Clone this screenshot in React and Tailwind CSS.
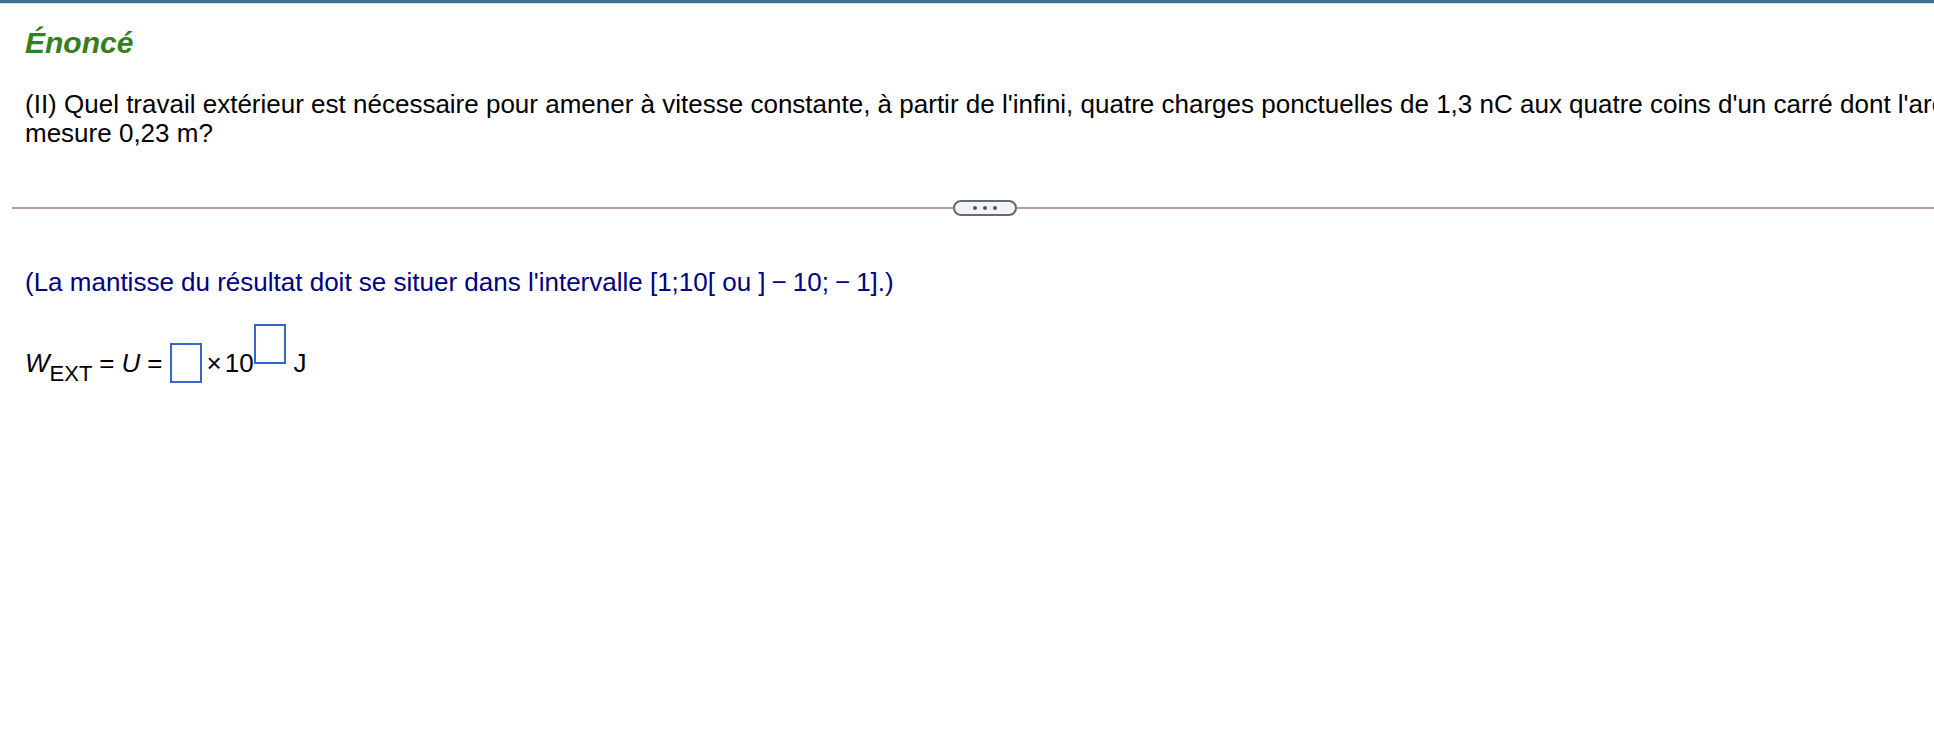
import React from 'react';

const font = { fontFamily: '"Liberation Sans", Arial, Helvetica, sans-serif' };

/* ── answer box ─────────────────────────────────────── */
const AnswerBox = ({ className = '' }) => (
  <span className={`inline-block w-[32px] h-[40px] border-2 border-[#3a66c9] bg-white ${className}`} />
);

const Separator = () => (
  <div className="flex items-center w-[1946px] h-[16px]">
    <div className="flex-1 h-[2px] bg-[#b6999f]" />
    <button className="flex items-center justify-center gap-[6px] w-[64px] h-[16px] rounded-full border-2 border-[#5f6b7a] bg-[#f3f4f6]">
      <span className="w-[4px] h-[4px] rounded-full bg-[#4b5563]" />
      <span className="w-[4px] h-[4px] rounded-full bg-[#4b5563]" />
      <span className="w-[4px] h-[4px] rounded-full bg-[#4b5563]" />
    </button>
    <div className="flex-1 h-[2px] bg-[#b6999f]" />
  </div>
);

export default function App() {
  return (
    <div className="w-full min-h-[730px] bg-white overflow-hidden" style={font}>
      <div className="h-[3px] bg-[#3e6f96]" />
      <div className="h-px bg-[#d3dce4]" />

      <div className="w-[2000px] pl-[12px]">
        {/* — heading — */}
        <h2 className="mt-[22px] pl-[13px] text-[30px] leading-[34px] font-bold italic text-[#34801c]">
          Énoncé
        </h2>

        {/* — question — */}
        <p className="mt-[30px] pl-[13px] w-[1990px] text-[26px] leading-[29px] text-black">
          (II) Quel travail extérieur est nécessaire pour amener à vitesse constante, à partir de l'infini,
          quatre charges ponctuelles de 1,3 nC aux quatre coins d'un carré dont l'arête mesure 0,23 m?
        </p>

        <div className="mt-[52px]">
          <Separator />
        </div>

        {/* — hint — */}
        <p className="mt-[52px] pl-[13px] text-[26px] leading-[29px] text-[#000080]">
          (La mantisse du résultat doit se situer dans l'intervalle [1;10[ ou ]<span className="mx-[6px]">−</span>10;<span className="mx-[6px]">−</span>1].)
        </p>

        {/* — formula — */}
        <div className="mt-[27px] pl-[13px] text-[26px] leading-[29px] text-black whitespace-nowrap">
          <span className="italic">W</span>
          <span className="text-[22px] align-[-9px]">EXT</span>
          <span className="mx-[7px]">=</span>
          <span className="italic">U</span>
          <span className="mx-[7px]">=</span>
          <AnswerBox className="align-[-11px]" />
          <span className="ml-[5px] mr-[3px]">×</span>
          <span>10</span>
          <AnswerBox className="align-[8px] w-[31px]" />
          <span className="ml-[8px]">J</span>
        </div>
      </div>
    </div>
  );
}
